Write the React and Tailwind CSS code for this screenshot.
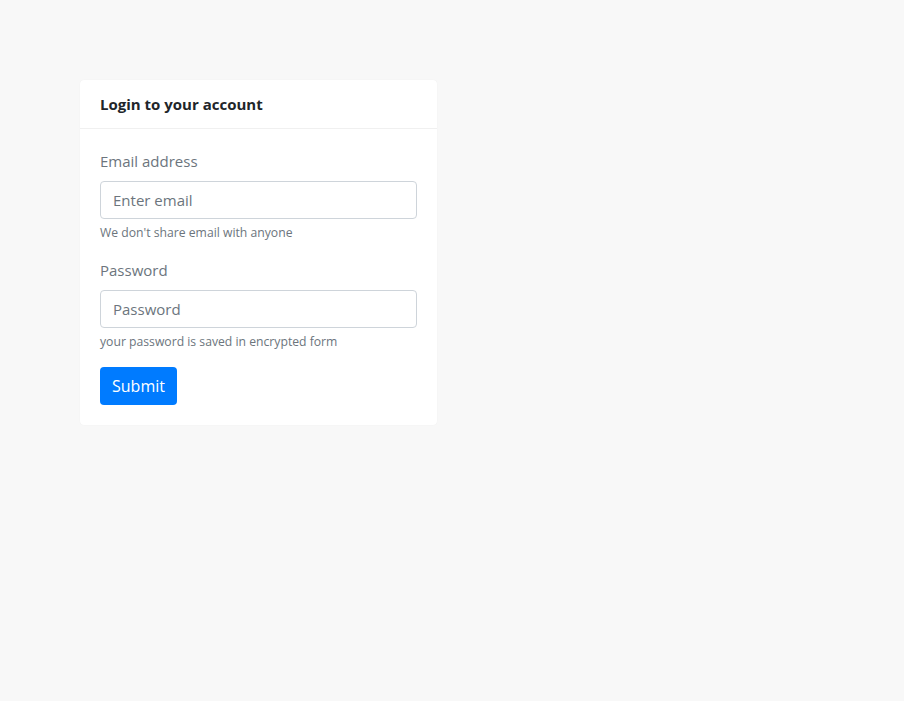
export default function App() {
  return (
    <div className="min-h-screen bg-[#f8f8f8] p-20 font-['Segoe_UI','Open_Sans',sans-serif] text-[#212529]">
      <div className="w-[357px] rounded bg-white shadow-[0_0_1px_rgba(0,0,0,0.08)]">
        <div className="border-b border-[#f0f0f0] px-5 py-3 text-[15px] font-bold leading-6">
          Login to your account
        </div>
        <form className="p-5" onSubmit={e => e.preventDefault()}>
          <div className="mb-4">
            <label className="mb-2 block text-[15px] leading-6 text-[#6c757d]">Email address</label>
            <input
              type="email"
              placeholder="Enter email"
              className="block h-[38px] w-full rounded border border-[#ced4da] px-3 text-[15px] text-[#495057] placeholder:text-[#6c757d] outline-none"
            />
            <small className="mt-[5px] block text-[12.2px] leading-[18px] text-[#6c757d]">We don't share email with anyone</small>
          </div>
          <div className="mb-4">
            <label className="mb-2 block text-[15px] leading-6 text-[#6c757d]">Password</label>
            <input
              type="password"
              placeholder="Password"
              className="block h-[38px] w-full rounded border border-[#ced4da] px-3 text-[15px] text-[#495057] placeholder:text-[#6c757d] outline-none"
            />
            <small className="mt-[5px] block text-[12.2px] leading-[18px] text-[#6c757d]">your password is saved in encrypted form</small>
          </div>
          <button type="submit" className="h-[38px] rounded bg-[#007bff] px-3 text-base text-white">
            Submit
          </button>
        </form>
      </div>
    </div>
  );
}
